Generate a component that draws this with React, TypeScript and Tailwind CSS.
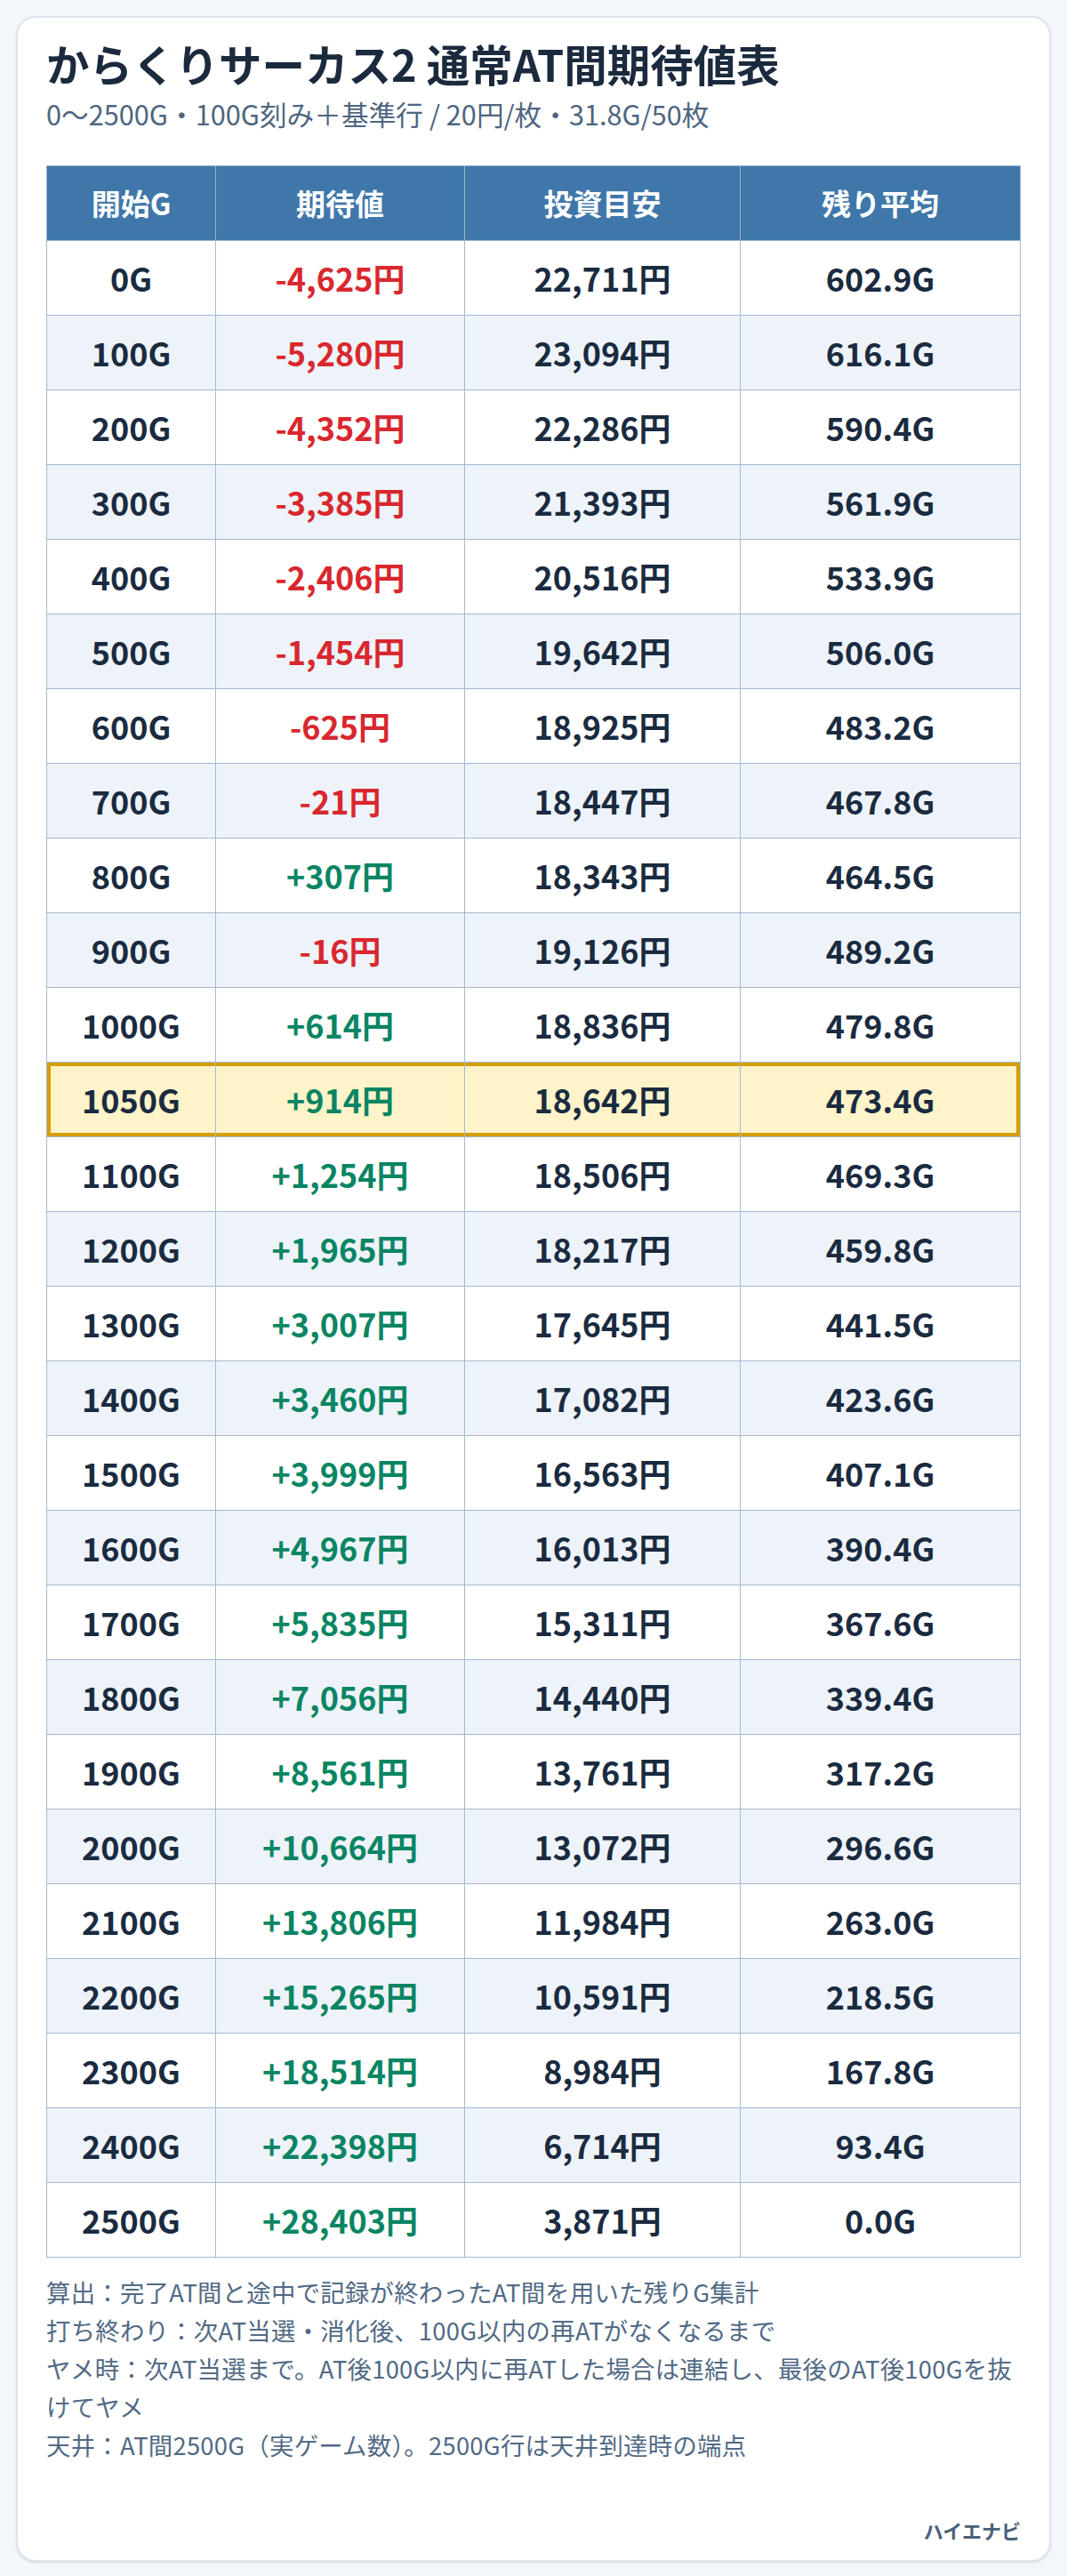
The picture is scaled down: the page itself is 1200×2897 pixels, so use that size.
// AT間期待値表 — からくりサーカス2

type Row = [string, string, string, string];

const rows: Row[] = [
  ["0G", "-4,625円", "22,711円", "602.9G"],
  ["100G", "-5,280円", "23,094円", "616.1G"],
  ["200G", "-4,352円", "22,286円", "590.4G"],
  ["300G", "-3,385円", "21,393円", "561.9G"],
  ["400G", "-2,406円", "20,516円", "533.9G"],
  ["500G", "-1,454円", "19,642円", "506.0G"],
  ["600G", "-625円", "18,925円", "483.2G"],
  ["700G", "-21円", "18,447円", "467.8G"],
  ["800G", "+307円", "18,343円", "464.5G"],
  ["900G", "-16円", "19,126円", "489.2G"],
  ["1000G", "+614円", "18,836円", "479.8G"],
  ["1050G", "+914円", "18,642円", "473.4G"],
  ["1100G", "+1,254円", "18,506円", "469.3G"],
  ["1200G", "+1,965円", "18,217円", "459.8G"],
  ["1300G", "+3,007円", "17,645円", "441.5G"],
  ["1400G", "+3,460円", "17,082円", "423.6G"],
  ["1500G", "+3,999円", "16,563円", "407.1G"],
  ["1600G", "+4,967円", "16,013円", "390.4G"],
  ["1700G", "+5,835円", "15,311円", "367.6G"],
  ["1800G", "+7,056円", "14,440円", "339.4G"],
  ["1900G", "+8,561円", "13,761円", "317.2G"],
  ["2000G", "+10,664円", "13,072円", "296.6G"],
  ["2100G", "+13,806円", "11,984円", "263.0G"],
  ["2200G", "+15,265円", "10,591円", "218.5G"],
  ["2300G", "+18,514円", "8,984円", "167.8G"],
  ["2400G", "+22,398円", "6,714円", "93.4G"],
  ["2500G", "+28,403円", "3,871円", "0.0G"],
];

export default function App() {
  return (
    <div className="min-h-screen bg-[#f3f6fa] p-[18px] font-['Noto_Sans_CJK_JP','Noto_Sans',sans-serif]">
      <div className="rounded-[22px] border-2 border-[#dde5ee] bg-white px-8 pt-[22px] pb-[17px] shadow-sm">
        {/* Header */}
        <h1 className="text-[48.5px] font-bold leading-[1.2] text-[#1b2a3d]">
          からくりサーカス2 通常AT間期待値表
        </h1>
        <p className="mt-[5px] text-[30.7px] leading-[45px] text-[#4e6680]">
          0〜2500G・100G刻み＋基準行 / 20円/枚・31.8G/50枚
        </p>

        {/* Table */}
        <table className="mt-[36px] w-full table-fixed border-collapse text-center">
          <colgroup>
            <col className="w-[190px]" />
            <col className="w-[280px]" />
            <col className="w-[310px]" />
            <col />
          </colgroup>
          <thead>
            <tr className="bg-[#3f77aa] text-white">
              {["開始G", "期待値", "投資目安", "残り平均"].map((h) => (
                <th
                  key={h}
                  className="border border-[#9ab3cb] py-[15px] text-[33px] font-bold leading-[53px]"
                >
                  {h}
                </th>
              ))}
            </tr>
          </thead>
          <tbody>
            {rows.map((r, i) => {
              const hl = r[0] === "1050G";
              const neg = r[1].startsWith("-");
              const bg = hl ? "bg-[#fef3c9]" : i % 2 ? "bg-[#eef3fa]" : "bg-white";
              return (
                <tr key={r[0]} className={bg}>
                  {r.map((c, j) => (
                    <td
                      key={j}
                      className={[
                        "border border-[#a3bad0] py-[15px] text-[36px] font-bold leading-[53px]",
                        j === 1
                          ? neg
                            ? "text-[#d9272e]"
                            : "text-[#0a8564]"
                          : "text-[#1a2b40]",
                        hl && j === 0
                          ? "shadow-[inset_4px_4px_0_#d69e06,inset_0_-4px_0_#d69e06]"
                          : "",
                        hl && (j === 1 || j === 2)
                          ? "shadow-[inset_0_4px_0_#d69e06,inset_0_-4px_0_#d69e06]"
                          : "",
                        hl && j === 3
                          ? "shadow-[inset_-4px_4px_0_#d69e06,inset_0_-4px_0_#d69e06]"
                          : "",
                      ].join(" ")}
                    >
                      {c}
                    </td>
                  ))}
                </tr>
              );
            })}
          </tbody>
        </table>

        {/* Notes */}
        <div className="mt-[17px] text-[27.4px] leading-[43px] tracking-[0.25px] text-[#526a85]">
          <p>算出：完了AT間と途中で記録が終わったAT間を用いた残りG集計</p>
          <p>打ち終わり：次AT当選・消化後、100G以内の再ATがなくなるまで</p>
          <p>
            ヤメ時：次AT当選まで。AT後100G以内に再ATした場合は連結し、最後のAT後100Gを抜
            <br />
            けてヤメ
          </p>
          <p>天井：AT間2500G（実ゲーム数）。2500G行は天井到達時の端点</p>
        </div>

        <div className="mt-[58px] text-right text-[22px] font-bold leading-[33px] text-[#4a6077]">
          ハイエナビ
        </div>
      </div>
    </div>
  );
}
